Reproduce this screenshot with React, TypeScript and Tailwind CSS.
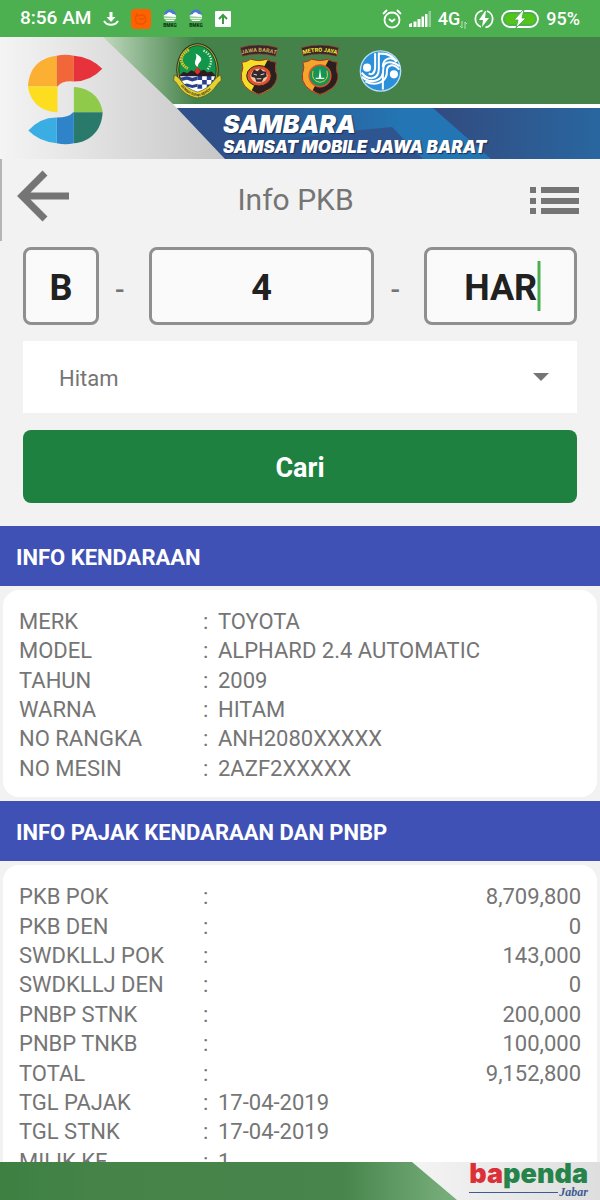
import type { ReactNode } from "react";

const vehicleInfo = [
  { label: "MERK", value: "TOYOTA" },
  { label: "MODEL", value: "ALPHARD 2.4 AUTOMATIC" },
  { label: "TAHUN", value: "2009" },
  { label: "WARNA", value: "HITAM" },
  { label: "NO RANGKA", value: "ANH2080XXXXX" },
  { label: "NO MESIN", value: "2AZF2XXXXX" },
];

const taxInfo = [
  { label: "PKB POK", value: "8,709,800", amount: true },
  { label: "PKB DEN", value: "0", amount: true },
  { label: "SWDKLLJ POK", value: "143,000", amount: true },
  { label: "SWDKLLJ DEN", value: "0", amount: true },
  { label: "PNBP STNK", value: "200,000", amount: true },
  { label: "PNBP TNKB", value: "100,000", amount: true },
  { label: "TOTAL", value: "9,152,800", amount: true },
  { label: "TGL PAJAK", value: "17-04-2019" },
  { label: "TGL STNK", value: "17-04-2019" },
  { label: "MILIK KE", value: "1" },
];

const plateField =
  "h-[78px] w-full rounded-lg border-[3px] border-[#8f8f8f] bg-[#fafafa] pt-1 text-center text-4xl font-bold text-[#212121] outline-none";

function BmkgIcon() {
  return (
    <svg viewBox="0 0 44 56" className="h-[19px] w-3.5">
      <path d="M4 16a18 16 0 0 1 36 0z" fill="#4a78d8" />
      <path d="M2 22c0-8 10-6 11-10 6-6 14-3 16 2 8-1 13 4 12 9z" fill="#fff" />
      <path d="M2 25h40l-3 5H5z" fill="#e4f5e2" />
      <path d="M6 32h32l-5 4H11z" fill="#fff" />
      <text x="22" y="54" textAnchor="middle" fontSize="15" fontWeight="900" fill="#12351a">BMKG</text>
    </svg>
  );
}

function StatusBar() {
  return (
    <div className="flex h-[37px] shrink-0 items-center justify-between bg-[#4caf50] px-5 text-white">
      <div className="flex items-center gap-3">
        <span className="text-[19px] font-medium">8:56 AM</span>
        <svg viewBox="0 0 16 16" className="size-4" fill="none" stroke="#fff">
          <path d="M8 1v6" strokeWidth="3" />
          <path d="M3.500 6h9L8 11z" fill="#fff" stroke="none" />
          <path d="M1 10c3 5 11 5 14 0" strokeWidth="2" />
        </svg>
        <svg viewBox="0 0 20 20" className="size-5">
          <rect width="20" height="20" rx="4" fill="#ff6100" />
          <path d="M6 5c-3 4-2 10 3 10 4 1 7-3 5-7-1-2-4-3-6-1M5 4l2 3M8 10h5" fill="none" stroke="#e85600" strokeWidth="1.500" />
        </svg>
        <BmkgIcon />
        <BmkgIcon />
        <svg viewBox="0 0 16 16" className="size-4">
          <rect width="16" height="16" rx="1" fill="#fff" />
          <path d="M8 13V4M4 8l4-4 4 4" fill="none" stroke="#3f9944" strokeWidth="2" />
        </svg>
      </div>
      <div className="flex items-center gap-[7px]">
        <svg viewBox="0 0 20 20" className="size-5" fill="none" stroke="#fff" strokeWidth="1.800">
          <circle cx="10" cy="11" r="7.500" />
          <path d="M1 5l4-4M19 5l-4-4M7 10l3 2.500L13 10" />
        </svg>
        <svg viewBox="0 0 22 16" className="h-4 w-[22px]" fill="#fff">
          <path d="M0 16v-3l3-1v4zM4.500 16v-5.500h3V16zM8.500 16V8h3v8zM12.500 16V5.500h2.500V16zM16 16V3h2.500v13z" />
          <path d="M19.500 16V0H22v16z" opacity=".4" />
        </svg>
        <span className="flex items-end text-lg font-medium">
          4G
          <svg viewBox="0 0 7 8" className="mb-1 h-2 w-[7px]" fill="none" stroke="#b9e2ba">
            <path d="M2 0v7L0 5M5 8V1l2 2" />
          </svg>
        </span>
        <svg viewBox="0 0 20 20" className="size-5" fill="none" stroke="#fff" strokeWidth="1.800">
          <path d="M8.500 1.600a8.500 8.500 0 0 0-1.500 16.400M11.500 18.400A8.500 8.500 0 0 0 13 2" />
          <path d="M11 2L5 11h4l-1 7 7-9h-4l1-7z" fill="#fff" stroke="none" />
        </svg>
        <svg viewBox="0 0 38 18" className="h-[18px] w-[38px]">
          <rect x="1" y="1" width="36" height="16" rx="8" fill="none" stroke="#fff" strokeWidth="1.800" />
          <rect x="4" y="4" width="30" height="10" rx="5" fill="#52c41a" />
          <path d="M22 0L13 10h4l-2 8 10-10h-4l2-8z" fill="#fff" stroke="#4caf50" />
        </svg>
        <span className="text-lg font-medium">95%</span>
      </div>
    </div>
  );
}

function SambaraLogo() {
  return (
    <svg viewBox="80 50 230 275" className="h-[92px] w-[77px]" role="img" aria-label="Sambara">
      <path d="M83 150C85 100 112 65 169 58V150z" fill="#fbb034" />
      <path d="M169 58q26-5 51 0v77q-36-3-49 15h-2z" fill="#f2673a" />
      <path d="M220 58q50 4 85 39q-35 38-85 38z" fill="#e7323c" />
      <path d="M83 150h88v77C115 225 88 190 83 150z" fill="#fcdd1f" />
      <path d="M220 152c50 3 80 33 86 75h-86z" fill="#8fca4b" />
      <path d="M220 227h86c-2 53-36 88-86 93z" fill="#2a7a6b" />
      <path d="M169 243q36 0 49-16h2v93q-25 5-51 0z" fill="#2e83c9" />
      <path d="M84 282q36-40 85-39v77q-54-5-85-38z" fill="#3aade3" />
    </svg>
  );
}

function WestJavaBadge() {
  return (
    <svg viewBox="38 10 148 175" className="h-[58px] w-[49px]">
      <defs>
        <clipPath id="jabar-shield">
          <ellipse cx="112" cy="92" rx="55" ry="70" />
        </clipPath>
      </defs>
      <ellipse cx="112" cy="94" rx="64" ry="80" fill="#1f3322" />
      <ellipse cx="112" cy="94" rx="61" ry="77" fill="#b9a62d" />
      <ellipse cx="112" cy="94" rx="58" ry="74" fill="#163f25" />
      <g clipPath="url(#jabar-shield)">
        <path d="M50 10h124v100H50z" fill="#12964a" />
        <path d="M50 108h124v70H50z" fill="#fff" />
        <path d="M50 112l14 5 16-4 16 5 16-4v11l-16 4-16-5-16 4-14-5zM50 134l14 5 16-4 16 5 16-4v9l-16 4-16-5-16 4-14-5z" fill="#27408f" />
        <path d="M112 112h14v13h-14zM140 112h14v13h-14zM126 125h14v13h-14zM154 125h14v13h-14zM112 138h14v13h-14zM140 138h14v13h-14z" fill="#27408f" />
        <path d="M54 113l16-13 11 4 12-9 9 4 10-12 9 10 11-3 10 8 12-3 16 14z" fill="#311b23" />
        <path d="M103 100l9-16 9 16-9 8z" fill="#d93026" />
      </g>
      <path d="M110 84c-15-14 5-21-4-39 21 10 20 20 13 26-6 5-5 8-5 13z" fill="#fff" />
      <path d="M86 34c-29 13-30 43-3 56" fill="none" stroke="#dfc52f" strokeWidth="9" strokeDasharray="5 2" />
      <path d="M130 36c27 12 28 38 13 56" fill="none" stroke="#dae8d1" strokeWidth="7" strokeDasharray="4 4" />
      <path d="M42 110l-2 17c15 3 16 42 72 52 53-10 57-49 72-52l-2-17c-19 4-27 40-70 51-43-11-51-47-70-51z" fill="#e8d12f" stroke="#4b5723" strokeWidth="2" />
      <path id="jabar-ribbon" d="M54 132c14 22 30 38 58 43 28-5 44-21 58-43" fill="none" />
      <text fontSize="11" fontWeight="700" fill="#3b3a20">
        <textPath href="#jabar-ribbon" startOffset="12">GEMAH RIPAH REPEH</textPath>
      </text>
    </svg>
  );
}

type PoliceBadgeProps = { id: string; name: string; nameColor: string; gold: string; children: ReactNode };

function PoliceBadge({ id, name, nameColor, gold, children }: PoliceBadgeProps) {
  return (
    <svg viewBox="0 0 120 154" className="h-[51px] w-10">
      <path d="M4 8q56-16 112 0l-6 26q-50-14-100 0z" fill="#35272a" stroke="#a43a2e" strokeWidth="2" />
      <path id={id} d="M9 28q51-15 102 0" fill="none" />
      <text fontSize="17" fontWeight="800" fill={nameColor} textAnchor="middle">
        <textPath href={`#${id}`} startOffset="50%">{name}</textPath>
      </text>
      <path d="M8 52q16 0 26-9 26 9 52 0 10 9 26 9-7 16 1 34 7 44-53 64-60-20-53-64 8-18 1-34z" fill={gold} stroke="#b42f28" strokeWidth="3" />
      <path d="M86 45q10 7 25 8-6 16 1 34 7 41-52 61-14-5-22-11z" fill="#2b2020" />
      {children}
    </svg>
  );
}

function WaterBadge() {
  return (
    <svg viewBox="0 0 134 124" className="h-[42px] w-[45px]">
      <circle cx="67" cy="62" r="60" fill="#2b8fda" stroke="#b9def5" strokeWidth="4" />
      <g fill="none" stroke="#fff" strokeWidth="6">
        <path d="M62 7v48c0 32-32 38-51 12" />
        <path d="M51 9v42c0 18-11 24-19 18" />
        <path d="M12 79c26 24 65 13 63-21 0-30 30-25 49-10" />
        <path d="M22 93c35 18 66-2 64-31 0-19 19-24 37-4" />
        <path d="M74 117V67M62 11q35-5 52 24" />
        <path d="M74 50c0-26 23-33 42-17" />
      </g>
      <circle cx="27" cy="52" r="12" fill="#fff" />
      <circle cx="107" cy="72" r="12" fill="#fff" />
    </svg>
  );
}

function Banner() {
  return (
    <header className="relative flex h-[122px] shrink-0 overflow-hidden bg-[#2f5088]">
      <svg viewBox="0 0 600 122" preserveAspectRatio="none" className="absolute inset-0 size-full">
        <defs>
          <linearGradient id="banner-grey">
            <stop offset="0" stopColor="#f4f4f4" />
            <stop offset=".4" stopColor="#e2e2e2" />
            <stop offset="1" stopColor="#c6c6c6" />
          </linearGradient>
          <linearGradient id="banner-green" gradientUnits="userSpaceOnUse" x1="100" x2="195">
            <stop offset="0" stopColor="#c4dcc2" />
            <stop offset="1" stopColor="#45824a" />
          </linearGradient>
          <linearGradient id="banner-blue" gradientUnits="userSpaceOnUse" x1="230" x2="400">
            <stop offset="0" stopColor="#2f5088" />
            <stop offset="1" stopColor="#2475b3" />
          </linearGradient>
          <linearGradient id="banner-navy" gradientUnits="userSpaceOnUse" x1="433" x2="600">
            <stop offset="0" stopColor="#324b80" />
            <stop offset="1" stopColor="#29669f" />
          </linearGradient>
        </defs>
        <path d="M95 0h505v67H165z" fill="url(#banner-green)" />
        <path d="M165 67h435v4H170z" fill="#fff" />
        <path d="M170 71h430v51H220z" fill="url(#banner-blue)" />
        <path d="M255 122l10-16 85-12 42-4 31 32z" fill="#2f5590" />
        <path d="M433 71h167v51H491z" fill="url(#banner-navy)" />
        <path d="M0 0h103l70 67 52 55H0z" fill="url(#banner-grey)" />
      </svg>
      <div className="relative flex w-[167px] shrink-0 pt-4 pl-[27px]">
        <SambaraLogo />
      </div>
      <div className="relative flex flex-col">
        <div className="flex h-[67px] items-center">
          <div className="flex w-[61px] justify-center">
            <WestJavaBadge />
          </div>
          <div className="flex w-[61px] justify-center">
            <PoliceBadge id="polda-jabar" name="JAWA BARAT" nameColor="#c9a552" gold="#f3df28">
              <ellipse cx="60" cy="93" rx="37" ry="31" fill="#e3512b" stroke="#2b2020" strokeWidth="3" />
              <ellipse cx="60" cy="93" rx="26" ry="21" fill="#f0c5a8" />
              <path d="M37 88l8-14 10 5 9-7 8 7 10 2 1 15-9 4-5 11H52l-4-12-11-3z" fill="#33272a" />
              <path d="M44 88l10 3M65 90l11-3M53 102h14" stroke="#ddd" strokeWidth="3" />
            </PoliceBadge>
          </div>
          <div className="flex w-[61px] justify-center">
            <PoliceBadge id="polda-metro" name="METRO JAYA" nameColor="#fbe62c" gold="#f4a52b">
              <circle cx="60" cy="93" r="33" fill="#159457" stroke="#e3512b" strokeWidth="4" />
              <path d="M39 78q-8 30 21 35 29-5 21-35" fill="none" stroke="#d9c94a" strokeWidth="3" />
              <path d="M60 70l4 29h9v4H47v-4h9z" fill="#f1f1df" />
            </PoliceBadge>
          </div>
          <div className="flex w-[61px] justify-center">
            <WaterBadge />
          </div>
        </div>
        <div className="mt-2 pl-14 font-['Inter'] font-black whitespace-nowrap text-white italic [text-shadow:1px_1px_1px_#1c2c55]">
          <p className="text-[25px] leading-6">SAMBARA</p>
          <p className="text-[17px] leading-[22px]">SAMSAT MOBILE JAWA BARAT</p>
        </div>
      </div>
    </header>
  );
}

function TitleBar() {
  return (
    <div className="flex h-[82px] items-center justify-between border-l-2 border-[#b5b5b5] pr-[21px] pl-[15px]">
      <button type="button" aria-label="Kembali" className="pb-2">
        <svg viewBox="0 0 52 52" className="size-[52px]" fill="none" stroke="#757575" strokeWidth="7">
          <path d="M28 3L5 26l23 23M5 26h47" />
        </svg>
      </button>
      <h1 className="text-3xl text-[#757575]">Info PKB</h1>
      <button type="button" aria-label="Menu" className="pl-2">
        <svg viewBox="0 0 49 28" className="h-7 w-[49px]" fill="#757575">
          <path d="M0 1h6v6H0zM11 1h38v6H11zM0 12h6v6H0zM11 12h38v6H11zM0 22h6v6H0zM11 22h38v6H11z" />
        </svg>
      </button>
    </div>
  );
}

function Dash() {
  return <span className="w-[50px] shrink-0 pt-2 pr-2 text-center text-[28px] font-medium text-[#757575]">-</span>;
}

function SearchForm() {
  return (
    <form className="px-[23px] pt-1.5 pb-[23px]" onSubmit={(e) => e.preventDefault()}>
      <div className="flex items-center">
        <div className="min-w-0 flex-[76]">
          <input aria-label="Kode wilayah" defaultValue="B" className={plateField} />
        </div>
        <Dash />
        <div className="min-w-0 flex-[226]">
          <input aria-label="Nomor polisi" defaultValue="4" className={plateField} />
        </div>
        <Dash />
        <div className="relative min-w-0 flex-[153]">
          <input aria-label="Seri" defaultValue="HAR" className={plateField} />
          <span className="absolute inset-y-3.5 left-3/4 w-[3px] -translate-x-1/2 bg-[#4caf50]" />
        </div>
      </div>
      <div className="relative mt-4">
        <select aria-label="Warna plat" className="h-[72px] w-full appearance-none bg-white px-9 pt-0.5 text-[22px] text-[#757575] outline-none">
          <option>Hitam</option>
        </select>
        <div className="pointer-events-none absolute inset-y-0 right-7 flex items-center">
          <svg viewBox="0 0 16 8" className="h-2 w-4" fill="#757575">
            <path d="M0 0h16L8 8z" />
          </svg>
        </div>
      </div>
      <button type="submit" className="mt-[17px] h-[73px] w-full rounded-lg bg-[#1e8140] pt-1 text-[27px] font-bold text-white">
        Cari
      </button>
    </form>
  );
}

type Row = { label: string; value: string; amount?: boolean };

function InfoSection({ title, rows }: { title: string; rows: Row[] }) {
  return (
    <section className="pb-1">
      <h2 className="mb-1 flex h-[60px] items-center bg-[#3f51b5] px-4 pt-0.5 text-[22px] font-bold text-white">{title}</h2>
      <div className="mx-[3px] rounded-2xl bg-white px-4 pt-[17px] pb-3.5">
        <table className={rows.length > 6 ? "h-[294px] w-full" : "h-[176px] w-full"}>
          <tbody className="text-[22px] leading-[29px] text-[#757575]">
            {rows.map((row) => (
              <tr key={row.label}>
                <th scope="row" className="w-[184px] p-0 text-left font-normal">{row.label}</th>
                <td className="w-[15px] p-0">:</td>
                <td className={row.amount ? "p-0 text-right" : "p-0"}>{row.value}</td>
              </tr>
            ))}
          </tbody>
        </table>
      </div>
    </section>
  );
}

function Footer() {
  return (
    <footer className="relative flex h-[38px] shrink-0 justify-end overflow-hidden bg-[#ececec] pr-3">
      <svg viewBox="0 0 600 38" preserveAspectRatio="none" className="absolute inset-0 size-full">
        <defs>
          <linearGradient id="footer-green" gradientUnits="userSpaceOnUse" x1="0" x2="457">
            <stop offset="0" stopColor="#3d8042" />
            <stop offset=".2" stopColor="#458349" />
            <stop offset=".75" stopColor="#47854c" />
            <stop offset="1" stopColor="#7bb07e" />
          </linearGradient>
          <linearGradient id="footer-grey">
            <stop offset=".7" stopColor="#f3f3f3" />
            <stop offset="1" stopColor="#dedede" />
          </linearGradient>
        </defs>
        <path d="M0 0h600v38H0z" fill="url(#footer-grey)" />
        <path d="M0 0h412l45 38H0z" fill="url(#footer-green)" />
      </svg>
      <div className="relative">
        <p className="font-['Inter'] text-[27px] leading-6 font-black text-[#26834a]">
          <span className="text-[#dc3038]">ba</span>penda
        </p>
        <p className="flex items-center gap-px pt-0.5 font-['Liberation_Serif'] text-xs leading-2 font-bold text-[#3c5b91] italic">
          <span className="h-px flex-1 bg-[#3c5b91]" />
          Jabar
        </p>
      </div>
    </footer>
  );
}

export default function App() {
  return (
    <div className="flex h-screen flex-col bg-[#f2f2f2] font-['Roboto',sans-serif]">
      <StatusBar />
      <Banner />
      <main className="min-h-0 flex-1 overflow-y-auto [scrollbar-width:none]">
        <TitleBar />
        <SearchForm />
        <InfoSection title="INFO KENDARAAN" rows={vehicleInfo} />
        <InfoSection title="INFO PAJAK KENDARAAN DAN PNBP" rows={taxInfo} />
      </main>
      <Footer />
    </div>
  );
}
